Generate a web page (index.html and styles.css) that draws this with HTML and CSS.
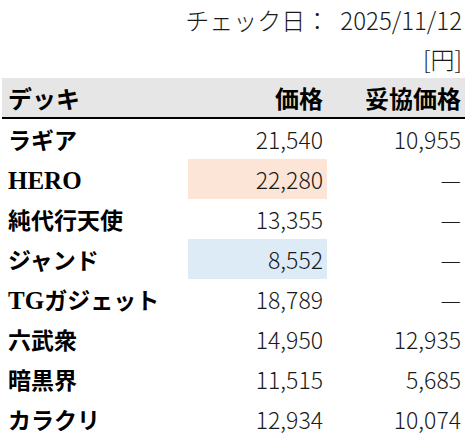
FILE: index.html
```html
<!DOCTYPE html>
<html lang="ja">
<head>
<meta charset="utf-8">
<link rel="stylesheet" href="styles.css">
</head>
<body>
<div class="info">チェック日：<span class="date">2025/11/12</span></div>
<div class="info">[円]</div>
<table class="prices">
  <thead>
    <tr><th class="name">デッキ</th><th class="num">価格</th><th class="num">妥協価格</th></tr>
  </thead>
  <tbody>
    <tr><td class="name">ラギア</td><td class="num">21,540</td><td class="num">10,955</td></tr>
    <tr><td class="name"><span class="latin">HERO</span></td><td class="num high">22,280</td><td class="num">—</td></tr>
    <tr><td class="name">純代行天使</td><td class="num">13,355</td><td class="num">—</td></tr>
    <tr><td class="name">ジャンド</td><td class="num low">8,552</td><td class="num">—</td></tr>
    <tr><td class="name"><span class="latin">TG</span>ガジェット</td><td class="num">18,789</td><td class="num">—</td></tr>
    <tr><td class="name">六武衆</td><td class="num">14,950</td><td class="num">12,935</td></tr>
    <tr><td class="name">暗黒界</td><td class="num">11,515</td><td class="num">5,685</td></tr>
    <tr><td class="name">カラクリ</td><td class="num">12,934</td><td class="num">10,074</td></tr>
  </tbody>
</table>
</body>
</html>
```
FILE: styles.css
```css
html, body {
  margin: 0;
  padding: 0;
  background: #fff;
}
body {
  font-family: "Noto Sans CJK JP", sans-serif;
  color: #1a1a1a;
  width: 468px;
}
.info {
  height: 39px;
  line-height: 39px;
  font-size: 24px;
  font-weight: 300;
  text-align: right;
  padding-right: 6px;
}
.date {
  margin-left: 11px;
}
.prices {
  margin-left: 2px;
  width: 463px;
  border-collapse: collapse;
  table-layout: fixed;
}
.prices th, .prices td {
  padding: 0;
  white-space: nowrap;
}
.prices th {
  background: #e6e6e6;
  height: 39px;
  border-bottom: 2px solid #000;
  font-weight: 700;
  font-size: 24px;
  color: #000;
}
.prices td {
  height: 40px;
  font-size: 23px;
  font-weight: 300;
}
.prices th.name, .prices td.name {
  text-align: left;
  padding-left: 6px;
  width: 180px;
}
.prices td.name {
  font-weight: 700;
  font-size: 23px;
  color: #000;
}
.latin {
  font-family: "Liberation Serif", serif;
  font-size: 25px;
}
.prices th.num, .prices td.num {
  text-align: right;
  padding-right: 4px;
}
.prices th.num:nth-child(2), .prices td.num:nth-child(2) {
  width: 135px;
}
.high {
  background: #fce4d6;
}
.low {
  background: #ddebf7;
}
```
